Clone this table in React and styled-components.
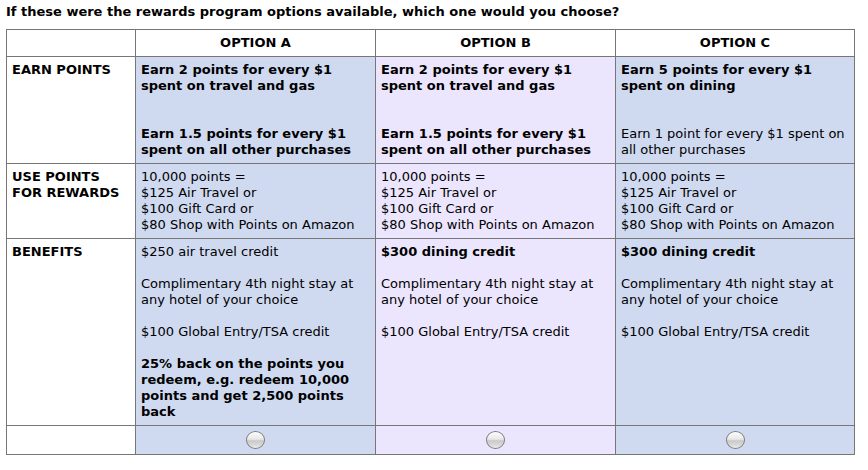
import React from "react";
import styled, { createGlobalStyle } from "styled-components";

const GlobalStyle = createGlobalStyle`
    body {
        margin: 0;
        background: #fff;
        color: #000;
        font-family: "DejaVu Sans", Verdana, sans-serif;
        font-size: 13px;
        line-height: 16px;
    }
`;

const BLUE = "#cfdaf1";
const LAVENDER = "#ebe6fd";

const Page = styled.div`
    padding: 4px 6px 0 6px;
`;

const Question = styled.div`
    font-weight: bold;
    margin-bottom: 9px;
`;

const Grid = styled.table`
    border-collapse: collapse;
    width: 848px;
    table-layout: fixed;
    border: 1px solid #767676;
`;

const Cell = styled.td`
    border: 1px solid #767676;
    padding: 5px 5px;
    vertical-align: top;
    background: ${props => props.bg || "#fff"};
    text-align: ${props => (props.center ? "center" : "left")};
    font-weight: ${props => (props.bold ? "bold" : "normal")};
`;

const HeadCell = styled.th`
    border: 1px solid #767676;
    padding: 5px 5px;
    font-weight: bold;
    text-align: center;
    background: #fff;
`;

const Para = styled.div`
    font-weight: ${props => (props.bold ? "bold" : "normal")};
    margin-bottom: ${props => props.gap || 0}px;
    &:last-child {
        margin-bottom: 0;
    }
`;

const Radio = styled.input.attrs({ type: "radio" })`
    appearance: none;
    -webkit-appearance: none;
    display: block;
    margin: 0 auto;
    width: 19px;
    height: 18px;
    border-radius: 50%;
    border: 1px solid #7c7c7c;
    background: linear-gradient(
        to bottom,
        #fbfbfb 0%,
        #e8e8e8 45%,
        #c9c9c9 55%,
        #dcdcdc 85%,
        #efefef 100%
    );
    box-shadow: inset 0 1px 1px rgba(255, 255, 255, 0.9);
`;

const options = [
    {
        name: "OPTION A",
        bg: BLUE,
        earn: [
            { text: "Earn 2 points for every $1 spent on travel and gas", bold: true },
            { text: "Earn 1.5 points for every $1 spent on all other purchases", bold: true }
        ],
        benefits: [
            { text: "$250 air travel credit" },
            { text: "Complimentary 4th night stay at any hotel of your choice" },
            { text: "$100 Global Entry/TSA credit" },
            { text: "25% back on the points you redeem, e.g. redeem 10,000 points and get 2,500 points back", bold: true }
        ]
    },
    {
        name: "OPTION B",
        bg: LAVENDER,
        earn: [
            { text: "Earn 2 points for every $1 spent on travel and gas", bold: true },
            { text: "Earn 1.5 points for every $1 spent on all other purchases", bold: true }
        ],
        benefits: [
            { text: "$300 dining credit", bold: true },
            { text: "Complimentary 4th night stay at any hotel of your choice" },
            { text: "$100 Global Entry/TSA credit" }
        ]
    },
    {
        name: "OPTION C",
        bg: BLUE,
        earn: [
            { text: "Earn 5 points for every $1 spent on dining", bold: true },
            { text: "Earn 1 point for every $1 spent on all other purchases" }
        ],
        benefits: [
            { text: "$300 dining credit", bold: true },
            { text: "Complimentary 4th night stay at any hotel of your choice" },
            { text: "$100 Global Entry/TSA credit" }
        ]
    }
];

const rewardLines = [
    "10,000 points =",
    "$125 Air Travel or",
    "$100 Gift Card or",
    "$80 Shop with Points on Amazon"
];

export default function App() {
    return (
        <Page>
            <GlobalStyle />
            <Question>
                If these were the rewards program options available, which one would you choose?
            </Question>
            <Grid>
                <colgroup>
                    <col style={{ width: 129 }} />
                    <col style={{ width: 240 }} />
                    <col style={{ width: 240 }} />
                    <col style={{ width: 239 }} />
                </colgroup>
                <thead>
                    <tr>
                        <HeadCell />
                        {options.map(o => (
                            <HeadCell key={o.name}>{o.name}</HeadCell>
                        ))}
                    </tr>
                </thead>
                <tbody>
                    <tr>
                        <Cell bold>EARN POINTS</Cell>
                        {options.map(o => (
                            <Cell key={o.name} bg={o.bg}>
                                {o.earn.map((p, i) => (
                                    <Para key={i} bold={p.bold} gap={32}>
                                        {p.text}
                                    </Para>
                                ))}
                            </Cell>
                        ))}
                    </tr>
                    <tr>
                        <Cell bold>
                            USE POINTS
                            <br />
                            FOR REWARDS
                        </Cell>
                        {options.map(o => (
                            <Cell key={o.name} bg={o.bg}>
                                {rewardLines.map(line => (
                                    <Para key={line}>{line}</Para>
                                ))}
                            </Cell>
                        ))}
                    </tr>
                    <tr>
                        <Cell bold>BENEFITS</Cell>
                        {options.map(o => (
                            <Cell key={o.name} bg={o.bg}>
                                {o.benefits.map((p, i) => (
                                    <Para key={i} bold={p.bold} gap={16}>
                                        {p.text}
                                    </Para>
                                ))}
                            </Cell>
                        ))}
                    </tr>
                    <tr>
                        <Cell />
                        {options.map(o => (
                            <Cell key={o.name} bg={o.bg} center>
                                <Radio name="choice" />
                            </Cell>
                        ))}
                    </tr>
                </tbody>
            </Grid>
        </Page>
    );
}
